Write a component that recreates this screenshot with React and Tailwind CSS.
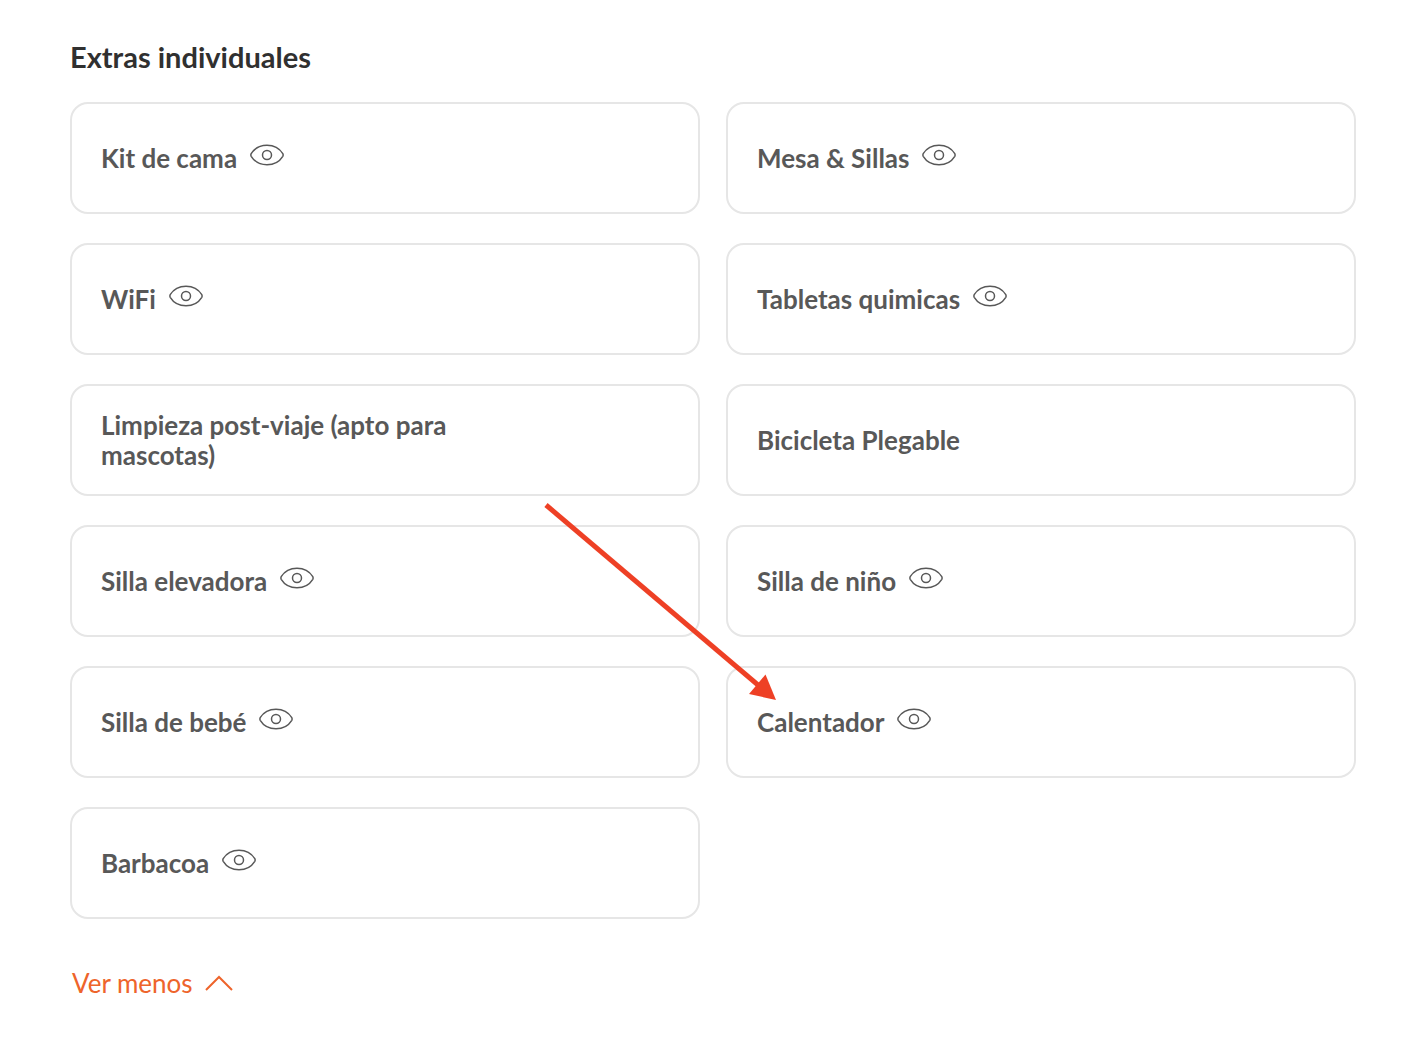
const extras = [
  { name: 'Kit de cama', info: true },
  { name: 'Mesa & Sillas', info: true },
  { name: 'WiFi', info: true },
  { name: 'Tabletas quimicas', info: true },
  { name: 'Limpieza post-viaje (apto para mascotas)' },
  { name: 'Bicicleta Plegable' },
  { name: 'Silla elevadora', info: true },
  { name: 'Silla de niño', info: true },
  { name: 'Silla de bebé', info: true },
  { name: 'Calentador', info: true, highlighted: true },
  { name: 'Barbacoa', info: true },
];

function EyeIcon() {
  return (
    <svg className="h-6 w-9" viewBox="0 0 36 24" fill="none" stroke="currentColor" strokeWidth="1.5" aria-hidden="true">
      <path d="M2.200 10.700C5.400 5.600 11 2.300 18 2.300S30.600 5.600 33.800 10.700Q34.500 12 33.800 13.300C30.600 18.400 25 21.700 18 21.700S5.400 18.400 2.200 13.300Q1.500 12 2.200 10.700Z" />
      <circle cx="18" cy="12" r="4.500" />
    </svg>
  );
}

function Arrow() {
  return (
    <svg
      className="pointer-events-none absolute right-full bottom-full -mr-[52px] -mb-[35px] h-52 w-60"
      viewBox="0 0 240 208"
      aria-hidden="true"
    >
      <path d="M6 10L224 195" stroke="#ee4025" strokeWidth="5" />
      <path d="M236 205L225.500 179.500L209 199Z" fill="#ee4025" />
    </svg>
  );
}

function ExtraCard({ name, info, highlighted }) {
  return (
    <li className="relative flex min-h-28 items-center rounded-[18px] border-2 border-[#e6e6e6] px-[29px]">
      <span className="max-w-96 text-[26px] leading-[30px] font-bold text-[#585858]">{name}</span>
      {info && (
        <button type="button" aria-label={`Ver ${name}`} className="ml-3 mb-1.5 shrink-0 text-[#585858]">
          <EyeIcon />
        </button>
      )}
      {highlighted && <Arrow />}
    </li>
  );
}

export default function App() {
  return (
    <main className="min-h-screen bg-white pt-9 pr-[68px] pb-10 pl-[70px] font-['Lato',sans-serif]">
      <h2 className="text-[29px] leading-[42px] font-bold text-[#303030]">Extras individuales</h2>
      <ul className="mt-6 grid grid-cols-2 gap-x-[26px] gap-y-[29px]">
        {extras.map((extra) => (
          <ExtraCard key={extra.name} {...extra} />
        ))}
      </ul>
      <button type="button" className="mt-11 ml-0.5 flex items-center gap-3 text-[26px] leading-[40px] text-[#ee642b]">
        Ver menos
        <svg className="h-4 w-7" viewBox="0 0 28 16" fill="none" stroke="currentColor" strokeWidth="2" aria-hidden="true">
          <path d="M1 15L14 2L27 15" />
        </svg>
      </button>
    </main>
  );
}
